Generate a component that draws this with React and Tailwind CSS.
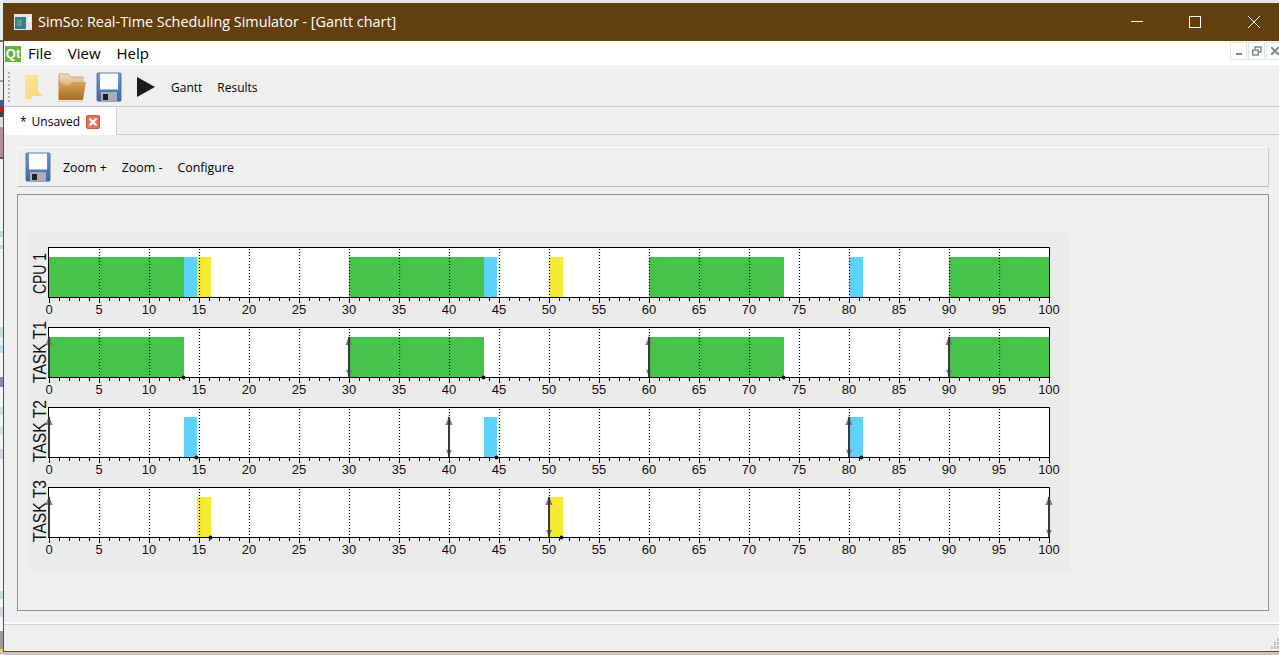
const UI_FONT = "font-['Open_Sans','Noto_Sans',sans-serif]";
const TICKS = Array.from({ length: 101 }, (_, i) => i);
const COLORS = { green: "#46c34a", blue: "#5dd2fc", yellow: "#f5ea30" };

// bits of the desktop that show to the left of the window
const DESKTOP_STRIP = [
  "h-[40px] bg-[#e6eef2]", "h-[2px] bg-[#77705f]", "h-[38px] bg-[#f0f0f0]", "h-[2px] bg-[#a0a0a0]",
  "h-[18px] bg-[#eeeeee]", "h-[6px] bg-[#3b5aa0]", "h-[6px] bg-[#c02020]", "h-[5px] bg-[#444444]",
  "h-[10px] bg-[#dcdcdc]", "h-[30px] bg-[#b48e9d]", "h-[2px] bg-[#555555]", "h-[72px] bg-[#f4f4f4]",
  "h-[6px] bg-[#b5dcd8]", "h-[8px] bg-[#f4f4f4]", "h-[4px] bg-[#b8dccc]", "h-[78px] bg-[#f4f4f4]",
  "h-[10px] bg-[#c4e0d0]", "h-[8px] bg-[#e8eef6]", "h-[8px] bg-[#c0dcea]", "h-[24px] bg-[#f4f4f4]",
  "h-[10px] bg-[#8a8ab0]", "h-[20px] bg-[#f4f4f4]", "h-[8px] bg-[#cce4d2]", "h-[12px] bg-[#f4f4f4]",
  "h-[8px] bg-[#cce4d2]", "h-[14px] bg-[#f4f4f4]", "h-[10px] bg-[#d4d4e0]", "h-[132px] bg-[#f4f4f4]",
  "h-[8px] bg-[#c0e0dc]", "h-[8px] bg-[#f4f4f4]", "h-[10px] bg-[#d4d4e0]", "h-[14px] bg-[#f4f4f4]",
  "h-[18px] bg-[#9a9a9a]", "h-[3px] bg-[#e8d070]", "h-[2px] bg-[#c0c0c0]",
];

const ROWS = [
  {
    label: "CPU 1",
    top: 247,
    labelLength: 41,
    labelDrop: -3,
    bars: [
      [0, 13.5, "green"], [13.5, 14.8, "blue"], [14.8, 16.2, "yellow"],
      [30, 43.5, "green"], [43.5, 44.8, "blue"], [50, 51.4, "yellow"],
      [60, 73.5, "green"], [80, 81.4, "blue"], [90, 100, "green"],
    ],
    arrows: [],
    ends: [],
  },
  {
    label: "TASK T1",
    top: 327,
    labelLength: 62,
    labelDrop: 6,
    bars: [[0, 13.5, "green"], [30, 43.5, "green"], [60, 73.5, "green"], [90, 100, "green"]],
    arrows: [[0, false], [30, true], [60, true], [90, true]],
    ends: [13.5, 43.5, 73.5],
  },
  {
    label: "TASK T2",
    top: 407,
    labelLength: 62,
    labelDrop: 5,
    bars: [[13.5, 14.8, "blue"], [43.5, 44.8, "blue"], [80, 81.4, "blue"]],
    arrows: [[0, false], [40, true], [80, true]],
    ends: [14.8, 44.8, 81.3],
  },
  {
    label: "TASK T3",
    top: 487,
    labelLength: 62,
    labelDrop: 5,
    bars: [[14.8, 16.2, "yellow"], [50, 51.4, "yellow"]],
    arrows: [[0, false], [50, true], [100, true]],
    ends: [16.2, 51.3],
  },
];

// the svg starts at x=29, y=233 on the page
const barX = (t) => 20 + t * 10;
const lineX = (t) => 20.5 + t * 10;

function ChartRow({ row }) {
  const y = row.top - 233;
  const bottom = y + 50;
  return (
    <g>
      <rect x={20} y={y} width={1000} height={50} fill="#fff" />
      {row.bars.map(([a, b, c], i) => (
        <rect key={i} x={barX(a)} y={y + 10} width={(b - a) * 10} height={40} fill={COLORS[c]} />
      ))}
      {TICKS.filter((t) => t % 5 === 0 && t > 0 && t < 100).map((t) => (
        <line key={t} x1={lineX(t)} x2={lineX(t)} y1={y + 2} y2={bottom} stroke="#000" strokeWidth="1.2" strokeDasharray="1 2" />
      ))}
      <rect x={19.5} y={y + 0.5} width={1001} height={50} fill="none" stroke="#000" />
      {TICKS.map((t) => (
        <line key={t} x1={lineX(t)} x2={lineX(t)} y1={bottom} y2={bottom + (t % 5 === 0 ? 6 : 4)} stroke="#000" />
      ))}
      {TICKS.filter((t) => t % 5 === 0).map((t) => (
        <text key={t} x={lineX(t) - 0.5} y={bottom + 17} textAnchor="middle" fontSize="13" fontFamily="'Liberation Sans', sans-serif" fill="#111">{t}</text>
      ))}
      <text
        transform={`translate(17 ${bottom + row.labelDrop}) rotate(-90)`}
        fontSize="18"
        textLength={row.labelLength}
        lengthAdjust="spacingAndGlyphs"
        fontFamily="'Liberation Sans', sans-serif"
        fill="#111"
      >
        {row.label}
      </text>
      {row.arrows.map(([t, both]) => (
        <g key={t}>
          <path d={`M${lineX(t) - 0.5} ${y + 9} l-3.5 9 h7 z`} fill="#7c7c7c" />
          {both && <path d={`M${lineX(t) - 0.5} ${bottom - 1} l-3 -6 h6 z`} fill="#7c7c7c" />}
          <line x1={lineX(t) - 0.5} x2={lineX(t) - 0.5} y1={y + 10} y2={bottom} stroke="#3a3a3a" strokeWidth="2" />
        </g>
      ))}
      {row.ends.map((t) => (
        <circle key={t} cx={barX(t) - 0.5} cy={bottom + 0.5} r={2} fill="#111" />
      ))}
    </g>
  );
}

function GanttChart() {
  return (
    <svg width="1040" height="338" className="block bg-[#ebebeb]">
      {ROWS.map((row) => <ChartRow key={row.label} row={row} />)}
    </svg>
  );
}

function SaveIcon({ id }) {
  return (
    <svg width="26" height="30" viewBox="0 0 26 30" className="shrink-0">
      <defs>
        <linearGradient id={id} x1="0" y1="0" x2="0" y2="1">
          <stop offset="0" stopColor="#6f9bd0" />
          <stop offset="1" stopColor="#3d68a4" />
        </linearGradient>
      </defs>
      <rect x="1.5" y="29" width="24" height="1" fill="#cfcfcf" />
      <path d="M1 2 Q1 1 2 1 H24 Q25 1 25 2 V28 Q25 29 24 29 H2 Q1 29 1 28 z" fill={`url(#${id})`} stroke="#3f639a" strokeWidth="0.8" />
      <rect x="4" y="1.5" width="18" height="16" fill="#fcfcfc" />
      <rect x="5" y="20" width="16" height="9" fill="#a9aeb4" />
      <rect x="7" y="22" width="5" height="6" fill="#1f1f1f" />
    </svg>
  );
}

function FolderOpenIcon() {
  return (
    <svg width="30" height="30" viewBox="0 0 30 30" className="shrink-0">
      <defs>
        <linearGradient id="folder-front" x1="0" y1="0" x2="0" y2="1">
          <stop offset="0" stopColor="#e0a860" />
          <stop offset="1" stopColor="#a86c22" />
        </linearGradient>
        <linearGradient id="folder-back" x1="0" y1="0" x2="0" y2="1">
          <stop offset="0" stopColor="#f0dcc0" />
          <stop offset="1" stopColor="#d8b078" />
        </linearGradient>
      </defs>
      <path d="M2 2 H11 L14 5 H26 V14 H2 z" fill="url(#folder-back)" stroke="#b98f5c" strokeWidth="0.7" />
      <path d="M1.5 28 V8 L8 14 H12 L15 10 H29 L26 28 z" fill="url(#folder-front)" />
      <path d="M1 29 H26 V30 H1 z" fill="#d4cfc8" />
    </svg>
  );
}

function FolderClosedIcon() {
  return (
    <svg width="18" height="26" viewBox="0 0 18 26" className="shrink-0">
      <defs>
        <linearGradient id="folder-closed" x1="0" y1="0" x2="1" y2="1">
          <stop offset="0" stopColor="#fbe7a0" />
          <stop offset="1" stopColor="#f6d56f" />
        </linearGradient>
      </defs>
      <path d="M1 1 H14 V17 L18 22 H8 V25 H3 L1 23 z" fill="url(#folder-closed)" />
    </svg>
  );
}

function SubWindowButtons() {
  return (
    <div className="ml-auto flex h-[18px] w-[49px] gap-[1px] self-start overflow-hidden mt-[1px]">
      <span className="flex h-[18px] w-[17px] shrink-0 items-end justify-center border border-[#e2e2e2] pb-[4px]">
        <span className="h-[2px] w-[6px] bg-[#7b8894]" />
      </span>
      <span className="flex h-[18px] w-[17px] shrink-0 items-center justify-center border border-[#e2e2e2]">
        <svg width="10" height="10" viewBox="0 0 10 10" fill="none" stroke="#7b8894" strokeWidth="1.4">
          <rect x="0.7" y="4" width="5.5" height="5" />
          <path d="M3 4 V1 H9 V6 H6.5" />
        </svg>
      </span>
      <span className="flex h-[18px] w-[17px] shrink-0 items-center pl-[4px] border border-[#e2e2e2]">
        <svg width="8" height="8" viewBox="0 0 8 8" stroke="#7b8894" strokeWidth="2"><path d="M0 0 L8 8 M8 0 L0 8" /></svg>
      </span>
    </div>
  );
}

export default function App() {
  return (
    <div className={`flex h-[655px] w-[1279px] overflow-hidden bg-[#e3e3e3] text-black ${UI_FONT}`}>
      <div className="flex w-[3px] shrink-0 flex-col">
        {DESKTOP_STRIP.map((c, i) => <div key={i} className={`shrink-0 ${c}`} />)}
      </div>
      <div className="flex min-w-0 flex-1 flex-col">
        <div className="h-[3px] shrink-0 bg-[#e4e4e4]" />
        <div className="flex h-[649px] shrink-0 flex-col border-b border-l border-[#6b4a1f] bg-[#efefef]">
          {/* title bar */}
          <div className="-ml-px flex h-[38px] shrink-0 items-center bg-[#633f10] pl-[11px] text-white">
            <svg width="18" height="16" viewBox="0 0 18 16" className="mr-[6px] shrink-0">
              <rect width="18" height="16" fill="#dfe7ea" />
              <rect x="1" y="3" width="11" height="12" fill="#35808a" />
              <rect x="3" y="6" width="5" height="6" fill="#56a08f" />
              <rect x="14" y="3" width="3" height="5" fill="#fff" />
            </svg>
            <span className="text-[14.4px] leading-none pt-[1px]">SimSo: Real-Time Scheduling Simulator - [Gantt chart]</span>
            <svg width="12" height="12" viewBox="0 0 12 12" className="ml-auto shrink-0" stroke="#fff"><path d="M0 5.5 H12" /></svg>
            <svg width="12" height="12" viewBox="0 0 12 12" fill="none" className="ml-[46px] shrink-0" stroke="#fff"><rect x="0.5" y="0.5" width="11" height="11" /></svg>
            <svg width="12" height="12" viewBox="0 0 12 12" className="ml-[47px] mr-[19px] shrink-0" stroke="#fff"><path d="M0 0 L12 12 M12 0 L0 12" /></svg>
          </div>
          {/* menu bar */}
          <div className="flex h-[26px] shrink-0 items-center border-b border-[#e8e8e8] bg-white">
            <span className="ml-[1px] flex h-[16px] w-[16px] shrink-0 items-center justify-center bg-[#62b43c] font-['Liberation_Sans'] text-[13px] font-bold leading-none text-white">Qt</span>
            <span className="ml-[7px] text-[15px] leading-none">File</span>
            <span className="ml-[16px] text-[15px] leading-none">View</span>
            <span className="ml-[16px] text-[15px] leading-none">Help</span>
            <SubWindowButtons />
          </div>
          {/* main toolbar */}
          <div className="flex h-[40px] shrink-0 items-center border-t border-b border-t-[#fafafa] border-b-[#c8c8c8] pl-[4px]">
            <div className="h-[30px] w-[2px] shrink-0 border-l-2 border-dotted border-[#b0b0b0]" />
            <span className="ml-[14px]"><FolderClosedIcon /></span>
            <span className="ml-[15px]"><FolderOpenIcon /></span>
            <span className="ml-[9px]"><SaveIcon id="save-main" /></span>
            <svg width="18" height="20" viewBox="0 0 18 20" className="ml-[15px] shrink-0"><path d="M0 0 L18 10 L0 20 z" fill="#1c1c1c" /></svg>
            <span className="ml-[16px] pt-[2px] text-[12px] leading-none">Gantt</span>
            <span className="ml-[15px] pt-[2px] text-[12px] leading-none">Results</span>
          </div>
          {/* tab strip */}
          <div className="flex h-[28px] shrink-0 border-b border-[#d0d0d0]">
            <div className="flex h-[28px] w-[113px] items-center border-r border-[#d0d0d0] bg-white pb-[0px] pl-[16px] pt-[2px] text-[12px] leading-none">
              <span className="mr-[5px]">*</span>
              <span>Unsaved</span>
              <span className="ml-[6px] flex h-[14px] w-[14px] items-center justify-center rounded-[2px] border border-[#c85a3a] bg-[#e8705a]">
                <svg width="8" height="8" viewBox="0 0 8 8" stroke="#fff" strokeWidth="2.2"><path d="M0.5 0.5 L7.5 7.5 M7.5 0.5 L0.5 7.5" /></svg>
              </span>
            </div>
          </div>
          {/* tab content */}
          <div className="flex h-[487px] shrink-0 flex-col pl-[13px] pr-[10px] pt-[12px]">
            <div className="flex h-[40px] shrink-0 items-center border border-[#fafafa] border-b-[#b8b8b8] border-r-[#c8c8c8] pl-[7px]">
              <SaveIcon id="save-gantt" />
              <span className="ml-[12px] pt-[3px] text-[12.4px] leading-none">Zoom +</span>
              <span className="ml-[15px] pt-[3px] text-[12.4px] leading-none">Zoom -</span>
              <span className="ml-[15px] pt-[3px] text-[12.4px] leading-none">Configure</span>
            </div>
            <div className="mt-[7px] h-[417px] shrink-0 border border-[#8a929c] pl-[11px] pt-[38px]">
              <GanttChart />
            </div>
          </div>
          {/* status bar */}
          <div className="flex min-h-0 flex-1 items-end justify-end border-t-2 border-[#fbfbfb]">
            <div className="flex h-full w-full items-end justify-end border-t border-[#d2d2d2]">
              <svg width="8" height="11" viewBox="0 0 8 11" className="mb-[2px] shrink-0" fill="#c4c4c4">
                <rect x="6" y="0" width="2" height="3" /><rect x="3" y="4" width="2" height="3" /><rect x="6" y="4" width="2" height="3" />
                <rect x="0" y="8" width="2" height="3" /><rect x="3" y="8" width="2" height="3" /><rect x="6" y="8" width="2" height="3" />
              </svg>
            </div>
          </div>
        </div>
        <div className="flex-1 bg-[#c6c6c6]" />
      </div>
    </div>
  );
}
